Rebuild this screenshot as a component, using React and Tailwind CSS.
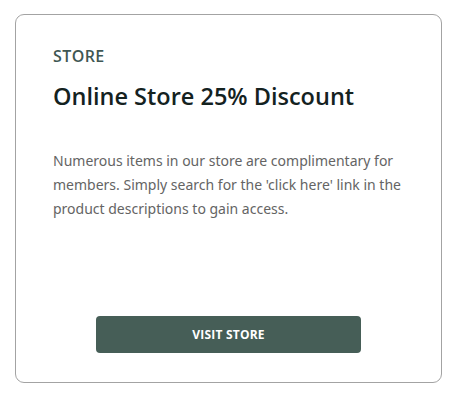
import React from 'react';

const App = () => {
  return (
    <div className="w-[456px] h-[402px] bg-white pt-[14px] pl-[15px]" style={{ fontFamily: '"Open Sans", sans-serif' }}>
      <div className="w-[427px] h-[369px] border border-[#a3a3a3] rounded-[9px] bg-white flex flex-col pl-[37px] pr-[20px] pt-[31px] pb-[29px]">
        <div className="text-[16px] leading-[20px] font-semibold text-[#3f5753] tracking-[0.4px]">STORE</div>
        <h1 className="mt-[14px] text-[23.5px] leading-[32px] font-semibold text-[#14221f]">Online Store 25% Discount</h1>
        <p className="mt-[37px] text-[14px] leading-[24px] text-[#646464]" style={{ fontFamily: '"Noto Sans", sans-serif' }}>
          Numerous items in our store are complimentary for members. Simply search for the 'click here' link in the product descriptions to gain access.
        </p>
        <div className="mt-auto flex justify-center pr-[17px]">
          <button className="w-[265px] h-[37px] rounded-[4px] bg-[#465e57] text-white text-[12px] font-bold tracking-[0.2px]">
            VISIT STORE
          </button>
        </div>
      </div>
    </div>
  );
};

export default App;
